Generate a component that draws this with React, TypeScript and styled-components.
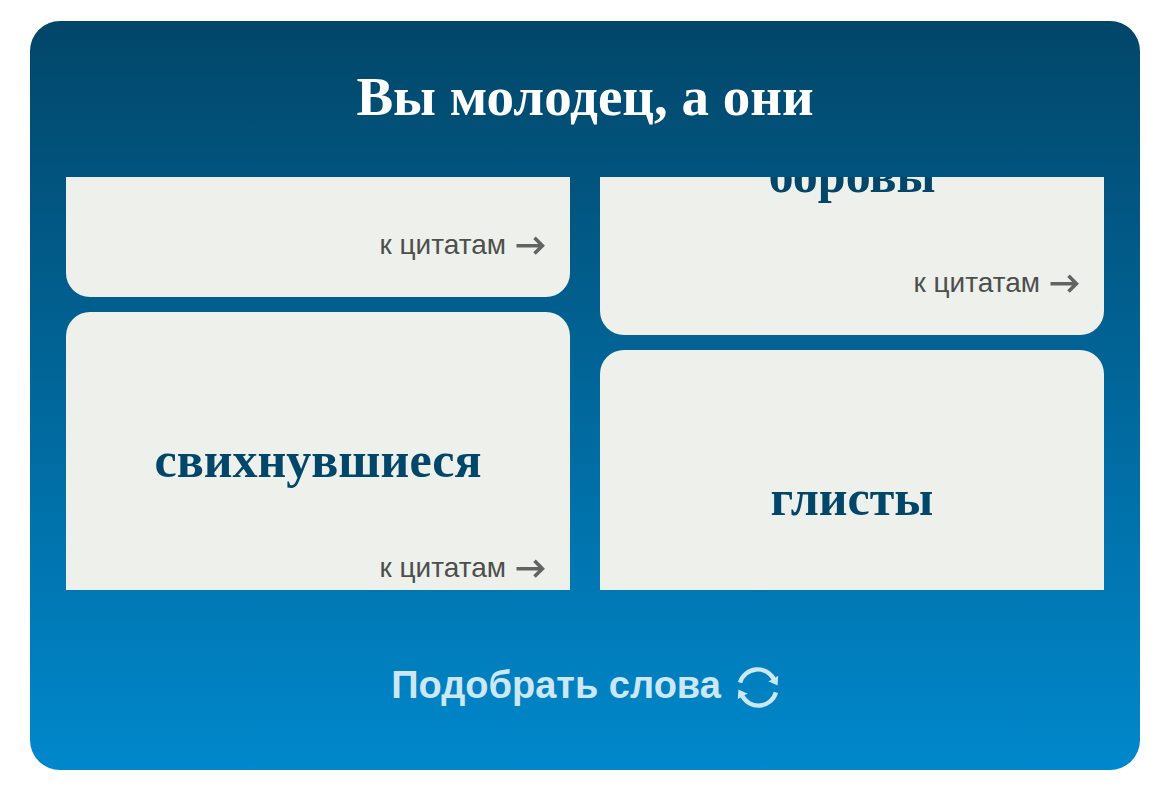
import React from 'react';
import styled, { createGlobalStyle } from 'styled-components';

const GlobalStyle = createGlobalStyle`
  *, *::before, *::after { box-sizing: border-box; }
  body {
    margin: 0;
    background: #ffffff;
    font-family: 'Liberation Sans', Arial, sans-serif;
  }
`;

const Page = styled.main`
  padding: 21px 30px 23px;
`;

const Panel = styled.section`
  display: flex;
  flex-direction: column;
  padding: 46px 36px 56px;
  border-radius: 30px;
  background: linear-gradient(180deg, #024669 0%, #0088cc 100%);
`;

const Title = styled.h1`
  margin: 0 0 50px;
  color: #ffffff;
  font: 700 55px/60px 'Liberation Serif', 'Times New Roman', serif;
  text-align: center;
`;

const Reels = styled.div`
  display: grid;
  grid-template-columns: 1fr 1fr;
  gap: 30px;
  height: 413px;
  overflow: hidden;
`;

const Reel = styled.div<{ $scrolled: number }>`
  display: flex;
  flex-direction: column;
  gap: 15px;
  margin-top: -${(p) => p.$scrolled}px;
`;

const Card = styled.article`
  display: grid;
  grid-template-rows: 1fr auto 1fr;
  flex: none;
  height: 308px;
  padding: 24px 25px 36px;
  border-radius: 24px;
  background: #eef1eb;
`;

const Word = styled.h2`
  grid-row: 2;
  margin: 0;
  color: #02466a;
  font: 700 50px/60px 'Liberation Serif', 'Times New Roman', serif;
  text-align: center;
`;

const QuotesLink = styled.a`
  grid-row: 3;
  align-self: end;
  justify-self: end;
  display: flex;
  align-items: center;
  gap: 10px;
  color: #4d4f4d;
  font-size: 28px;
  line-height: 32px;
  text-decoration: none;
`;

const ShuffleButton = styled.button`
  display: flex;
  align-items: center;
  align-self: center;
  gap: 16px;
  margin-top: 72px;
  padding: 0;
  border: 0;
  background: none;
  color: #cce7f5;
  font: 700 38px/46px 'Liberation Sans', Arial, sans-serif;
  cursor: pointer;
`;

const ShuffleLabel = styled.span`
  padding-bottom: 6px;
`;

const ArrowIcon = () => (
  <svg width="29" height="20" viewBox="0 0 29 20" fill="none" stroke="#626462" strokeWidth="3.6" aria-hidden="true">
    <path d="M0.5 10.7H26M18.5 2.8L26.4 10.7L18.5 18.6" />
  </svg>
);

const RefreshIcon = () => (
  <svg width="42" height="44" viewBox="0 0 42 44" aria-hidden="true">
    <g fill="none" stroke="currentColor" strokeWidth="4.4">
      <path d="M3 16.6A18.4 18.4 0 0 1 37 13.4" />
      <path d="M39 26.4A18.4 18.4 0 0 1 5 29.6" />
    </g>
    <path fill="currentColor" d="M41.2 9.8L40.6 19.6L31.2 15.2L35.6 13.4Z" />
    <path fill="currentColor" d="M0.8 33.2L1.4 23.4L10.8 27.8L6.4 29.6Z" />
  </svg>
);

const reels: { scrolled: number; words: (string | null)[] }[] = [
  { scrolled: 188, words: [null, 'свихнувшиеся'] },
  { scrolled: 150, words: ['боровы', 'глисты'] },
];

export default function App() {
  return (
    <>
      <GlobalStyle />
      <Page>
        <Panel>
          <Title>Вы молодец, а они</Title>
          <Reels>
            {reels.map((reel) => (
              <Reel key={reel.scrolled} $scrolled={reel.scrolled}>
                {reel.words.map((word, index) => (
                  <Card key={index}>
                    {word && <Word>{word}</Word>}
                    <QuotesLink href="#quotes">
                      к цитатам
                      <ArrowIcon />
                    </QuotesLink>
                  </Card>
                ))}
              </Reel>
            ))}
          </Reels>
          <ShuffleButton type="button">
            <ShuffleLabel>Подобрать слова</ShuffleLabel>
            <RefreshIcon />
          </ShuffleButton>
        </Panel>
      </Page>
    </>
  );
}
